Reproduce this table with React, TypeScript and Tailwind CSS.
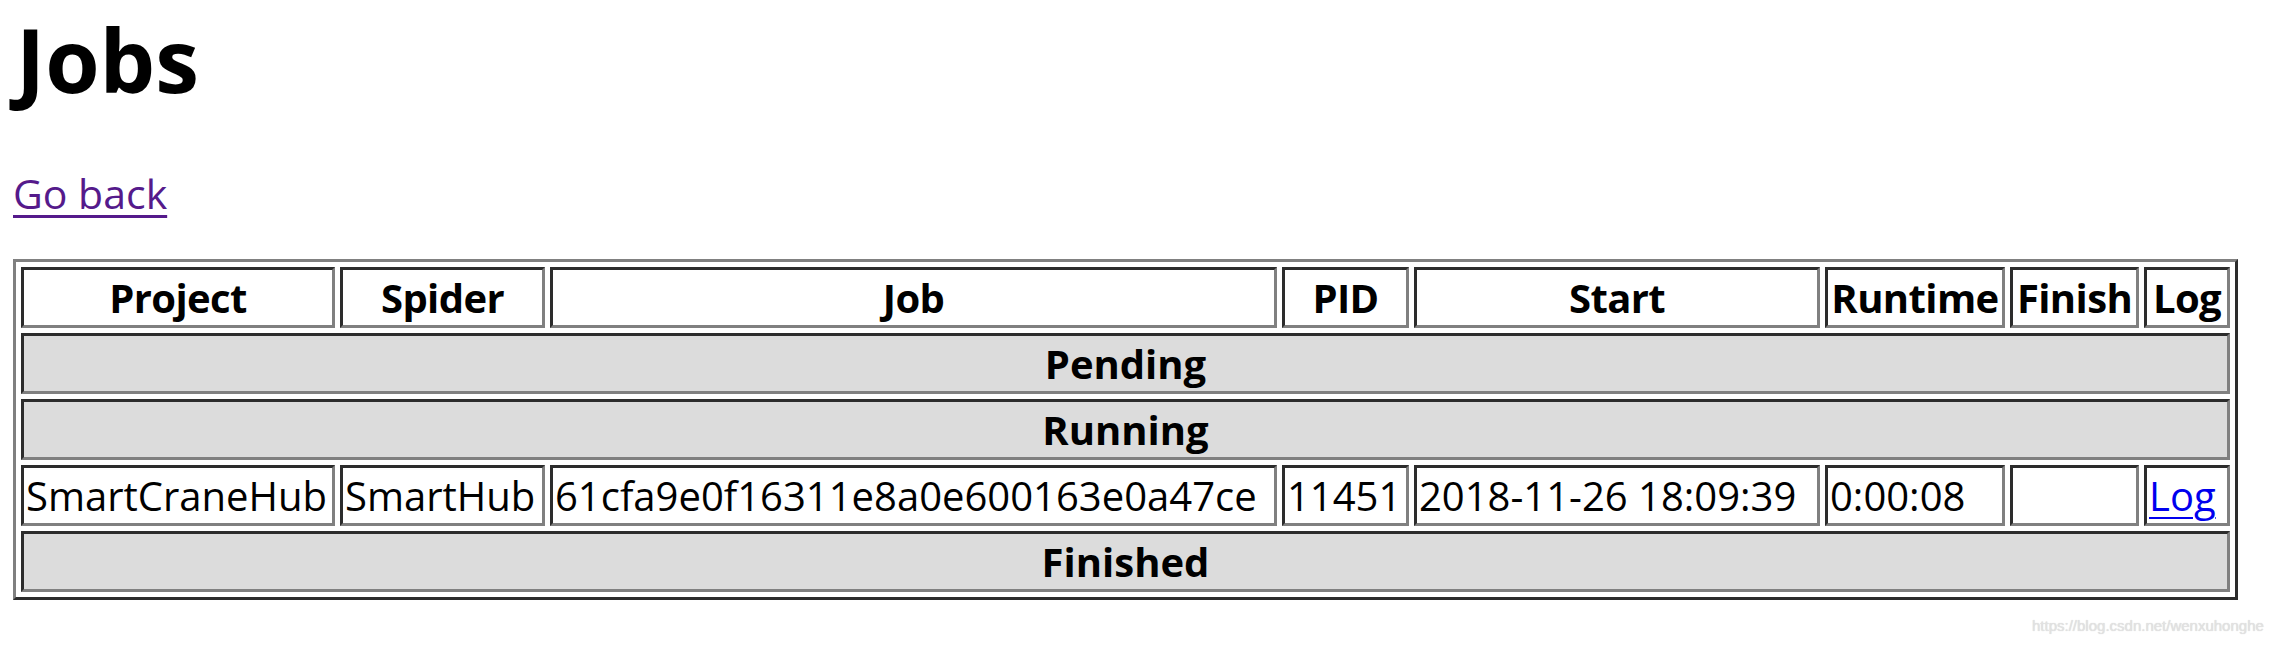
import React from 'react';

const columns = [
  { label: 'Project', width: 314 },
  { label: 'Spider', width: 205 },
  { label: 'Job', width: 727 },
  { label: 'PID', width: 127 },
  { label: 'Start', width: 406 },
  { label: 'Runtime', width: 180 },
  { label: 'Finish', width: 129 },
  { label: 'Log', width: 86 },
];

const cell =
  'border-[3px] border-t-[#2c2c2c] border-l-[#2c2c2c] border-b-[#808080] border-r-[#808080] px-[2px] py-[2px] leading-[51px] whitespace-nowrap overflow-visible';

const SectionRow = ({ title }: { title: string }) => (
  <tr>
    <th colSpan={8} className={`${cell} bg-[#dcdcdc] text-center font-bold`}>
      {title}
    </th>
  </tr>
);

export default function App() {
  return (
    <div
      className="relative w-[2285px] h-[646px] bg-white text-black pl-[13px] pt-[15px] overflow-hidden"
      style={{ fontFamily: '"Open Sans", "Noto Sans", sans-serif' }}
    >
      <h1 className="m-0 pl-[3px] text-[88px] font-bold leading-none">Jobs</h1>
      <p className="mt-[62px] text-[41px] leading-[56px]">
        <a href="#" className="text-[#551a8b] underline underline-offset-[6px] decoration-[3px]">
          Go back
        </a>
      </p>

      <table
        className="mt-[38px] table-fixed border-separate border-spacing-[5px] w-[2225px] border-[3px] border-t-[#808080] border-l-[#808080] border-b-[#2c2c2c] border-r-[#2c2c2c] text-[40px]"
      >
        <colgroup>
          {columns.map(c => (
            <col key={c.label} style={{ width: c.width }} />
          ))}
        </colgroup>
        <thead>
          <tr>
            {columns.map(c => (
              <th key={c.label} className={`${cell} text-center font-bold tracking-[-0.6px]`}>
                {c.label}
              </th>
            ))}
          </tr>
        </thead>
        <tbody>
          <SectionRow title="Pending" />
          <SectionRow title="Running" />
          <tr>
            <td className={cell}>SmartCraneHub</td>
            <td className={cell}>SmartHub</td>
            <td className={cell}>61cfa9e0f16311e8a0e600163e0a47ce</td>
            <td className={cell}>11451</td>
            <td className={cell}>2018-11-26 18:09:39</td>
            <td className={cell}>0:00:08</td>
            <td className={cell}></td>
            <td className={cell}>
              <a href="#" className="text-[#0000ee] underline underline-offset-[6px] decoration-[2px]">
                Log
              </a>
            </td>
          </tr>
          <SectionRow title="Finished" />
        </tbody>
      </table>

      {/* csdn watermark over the page corner */}
      <div
        className="absolute left-[2032px] top-[618px] text-[15px] leading-none text-[#e2e2e2] [text-shadow:0_0_1px_#cfcfcf]"
        style={{ fontFamily: '"Liberation Sans", Arial, sans-serif' }}
      >
        https://blog.csdn.net/wenxuhonghe
      </div>
    </div>
  );
}
